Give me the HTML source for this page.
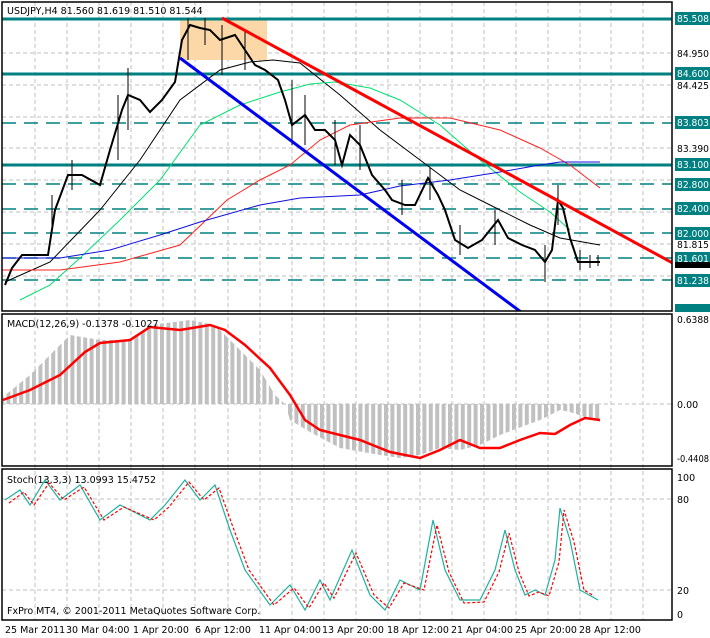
<!DOCTYPE html>
<html><head><meta charset="utf-8"><style>
body{margin:0;background:#fff;}
svg{display:block;font-family:"DejaVu Sans",sans-serif;font-size:9.5px;}
</style></head><body>
<svg width="710" height="638" viewBox="0 0 710 638" xmlns="http://www.w3.org/2000/svg">
<defs>
<pattern id="st" width="6.4" height="10" patternUnits="userSpaceOnUse"><rect width="4" height="10" fill="#c0c0c0"/></pattern>
<clipPath id="c1"><rect x="2" y="2" width="670" height="309"/></clipPath>
<clipPath id="c2"><rect x="2" y="314" width="670" height="152"/></clipPath>
</defs>
<rect width="710" height="638" fill="#fff"/>
<g stroke="#c0c0c0" stroke-dasharray="4,3" stroke-width="1">
<path d="M35 2V620M67 2V620M99 2V620M131 2V620M163 2V620M195 2V620M228 2V620M260 2V620M292 2V620M324 2V620M356 2V620M388 2V620M420 2V620M452 2V620M484 2V620M516 2V620M548 2V620M580 2V620M611 2V620M643 2V620"/>
<path d="M2 53H672M2 85H672M2 117H672M2 148H672M2 180H672M2 212H672M2 244H672M2 276H672"/>
<path d="M2 404H672M2 499H672M2 590H672"/>
</g>
<g clip-path="url(#c1)">
<rect x="180" y="19" width="87" height="41" fill="#fcd8a8"/>
<g stroke="#008080" stroke-width="3"><path d="M2 19H672M2 74H672M2 165H672"/></g>
<g stroke="#008080" stroke-width="1.5" stroke-dasharray="14,8"><path d="M2 123H672M2 184H672M2 209H672M2 233H672M2 258H672M2 280H672"/></g>
<polyline fill="none" stroke="#000" stroke-width="1" points="5,282 50,262 100,210 140,160 180,100 220,70 250,62 273,60 300,63 340,95 380,130 420,160 460,190 500,210 530,225 560,238 600,245"/>
<polyline fill="none" stroke="#00e070" stroke-width="1" points="20,300 50,285 80,258 120,220 160,180 200,125 240,105 280,92 310,84 335,82 370,88 400,100 440,125 480,160 520,192 550,212 570,230"/>
<polyline fill="none" stroke="#ff2020" stroke-width="1" points="0,270 60,270 120,262 180,245 227,200 260,180 290,165 320,140 350,125 400,118 450,118 500,130 540,148 570,165 600,188"/>
<polyline fill="none" stroke="#1010e0" stroke-width="1" points="0,258 60,258 110,250 160,235 200,222 260,205 300,198 360,195 400,186 450,180 500,172 540,165 560,162 600,162"/>
<polyline fill="none" stroke="#000" stroke-width="2" points="5,285 12,268 22,255 48,255 55,210 68,175 82,175 100,185 110,150 122,110 128,95 140,100 150,112 162,100 175,82 182,40 190,25 200,28 210,30 220,40 235,35 245,50 255,65 265,70 278,80 285,100 292,125 305,115 315,130 325,130 335,140 342,165 350,135 360,145 372,175 385,190 392,200 405,205 415,205 428,178 438,195 445,210 455,240 468,248 482,240 498,220 508,238 522,245 535,250 545,262 552,250 558,200 563,208 570,238 578,262 600,262"/>
<g stroke="#000" stroke-width="1"><path d="M128 68V130M52 195V225M72 160V190M118 95V160M188 18V60M205 18V45M222 25V75M245 30V70M292 80V145M305 95V145M335 120V165M360 125V170M402 180V215M430 168V200M460 225V255M495 210V245M545 245V282M558 185V225M580 250V270M590 255V268M598 255V266"/></g>
<line x1="222" y1="18" x2="680" y2="267" stroke="#ff0000" stroke-width="3"/>
<line x1="180" y1="58" x2="525" y2="315" stroke="#0000ee" stroke-width="3"/>
</g>
<g clip-path="url(#c2)">
<polygon fill="url(#st)" points="3,404 3,397 30,375 60,345 70,335 100,340 130,340 150,325 190,320 215,325 240,350 260,370 275,395 285,404 290,420 310,432 340,448 380,455 400,458 420,455 440,448 460,450 480,445 500,435 540,420 560,410 570,412 600,422 600,404"/>
<polyline fill="none" stroke="#ff0000" stroke-width="2.5" points="3,400 30,390 60,375 85,352 100,343 130,340 150,327 180,330 210,325 225,330 245,345 270,368 290,395 305,420 320,430 340,435 360,440 390,452 420,458 440,450 460,440 480,448 500,448 520,440 540,433 555,434 570,425 585,418 600,420"/>
</g>
<polyline fill="none" stroke="#20b0a0" stroke-width="1.2" points="5,500 20,490 30,505 45,480 60,500 80,485 100,520 120,505 150,520 165,505 185,480 200,500 215,485 230,530 245,570 270,605 290,585 305,610 320,580 330,600 352,550 370,595 385,610 400,580 420,590 433,520 445,570 460,600 480,600 495,570 505,530 515,570 525,595 535,590 545,595 555,560 560,508 570,540 580,590 598,600"/>
<polyline fill="none" stroke="#ff0000" stroke-width="1.2" stroke-dasharray="3,2" points="9,503 24,492 34,505 49,483 64,500 84,487 104,520 124,507 154,520 169,507 189,482 204,500 219,488 234,530 249,570 274,605 294,588 309,608 324,583 334,598 356,553 374,595 389,608 404,583 424,590 437,525 449,572 464,603 484,602 499,572 509,533 519,572 529,596 539,592 549,596 559,562 564,510 574,542 584,590 594,596"/>
<g fill="none" stroke="#000" stroke-width="1.5">
<rect x="2" y="2" width="670" height="309"/>
<rect x="2" y="314" width="670" height="152"/>
<rect x="2" y="469" width="670" height="151"/>
</g>
<g fill="#000">
<text x="677" y="57" textLength="32" lengthAdjust="spacingAndGlyphs">84.950</text><text x="677" y="89" textLength="32" lengthAdjust="spacingAndGlyphs">84.425</text><text x="677" y="152" textLength="32" lengthAdjust="spacingAndGlyphs">83.390</text><text x="677" y="248" textLength="32" lengthAdjust="spacingAndGlyphs">81.815</text>
<text x="677" y="323" textLength="32" lengthAdjust="spacingAndGlyphs">0.6388</text><text x="677" y="408">0.00</text><text x="677" y="462" textLength="32" lengthAdjust="spacingAndGlyphs">-0.4408</text>
<text x="677" y="481">100</text><text x="677" y="503">80</text><text x="677" y="594">20</text><text x="677" y="618">0</text>
</g>
<g fill="#fff">
<rect x="675" y="12" width="35" height="13" fill="#008080"/><text x="677" y="22" textLength="32" lengthAdjust="spacingAndGlyphs">85.508</text>
<rect x="675" y="67" width="35" height="13" fill="#008080"/><text x="677" y="77" textLength="32" lengthAdjust="spacingAndGlyphs">84.600</text>
<rect x="675" y="116" width="35" height="13" fill="#008080"/><text x="677" y="126" textLength="32" lengthAdjust="spacingAndGlyphs">83.803</text>
<rect x="675" y="158" width="35" height="13" fill="#008080"/><text x="677" y="168" textLength="32" lengthAdjust="spacingAndGlyphs">83.100</text>
<rect x="675" y="178" width="35" height="13" fill="#008080"/><text x="677" y="188" textLength="32" lengthAdjust="spacingAndGlyphs">82.800</text>
<rect x="675" y="202" width="35" height="13" fill="#008080"/><text x="677" y="212" textLength="32" lengthAdjust="spacingAndGlyphs">82.400</text>
<rect x="675" y="227" width="35" height="13" fill="#008080"/><text x="677" y="237" textLength="32" lengthAdjust="spacingAndGlyphs">82.000</text>
<rect x="675" y="252" width="35" height="13" fill="#008080"/><text x="677" y="262" textLength="32" lengthAdjust="spacingAndGlyphs">81.601</text>
<rect x="675" y="262" width="35" height="6" fill="#000"/>
<rect x="675" y="274" width="35" height="13" fill="#008080"/><text x="677" y="284" textLength="32" lengthAdjust="spacingAndGlyphs">81.238</text>
<rect x="675" y="304" width="35" height="8" fill="#008080"/>
</g>
<text x="7" y="14" fill="#000">USDJPY,H4  81.560 81.619 81.510 81.544</text>
<text x="7" y="327" fill="#000">MACD(12,26,9) -0.1378 -0.1027</text>
<text x="7" y="483" fill="#000">Stoch(13,3,3) 13.0993 15.4752</text>
<text x="7" y="614" fill="#000">FxPro MT4, © 2001-2011 MetaQuotes Software Corp.</text>
<g fill="#000">
<text x="5" y="633">25 Mar 2011</text><text x="66" y="633">30 Mar 04:00</text><text x="133" y="633">1 Apr 20:00</text><text x="195" y="633">6 Apr 12:00</text><text x="259" y="633">11 Apr 04:00</text><text x="322" y="633">13 Apr 20:00</text><text x="387" y="633">18 Apr 12:00</text><text x="451" y="633">21 Apr 04:00</text><text x="515" y="633">25 Apr 20:00</text><text x="579" y="633">28 Apr 12:00</text>
</g>
</svg>
</body></html>
